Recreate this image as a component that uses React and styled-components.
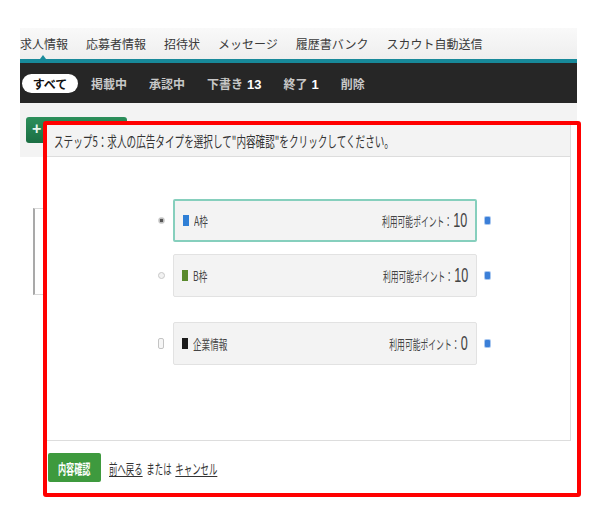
import React from "react";
import styled, { createGlobalStyle } from "styled-components";

const Global = createGlobalStyle`
  html, body { margin: 0; padding: 0; background: #ffffff; }
  body { font-family: "Noto Sans CJK JP", "Noto Sans", "Liberation Sans", sans-serif; color: #333; }
`;

const Page = styled.div`
  position: relative;
  width: 557px;
  margin: 28px 0 0 20px;
  height: 504px;
`;

const TopNav = styled.nav`
  display: flex;
  align-items: center;
  gap: 18px;
  height: 31px;
  background: linear-gradient(#f9f9f9, #eeeeee);
  position: relative;
`;

const NavItem = styled.span`
  position: relative;
  font-size: 12px;
  color: #3a3a3a;
  white-space: nowrap;
  line-height: 31px;
  ${p => p.$active && `
    &::after {
      content: "";
      position: absolute;
      left: 50%;
      bottom: 0;
      margin-left: -4px;
      border-left: 3px solid transparent;
      border-right: 3px solid transparent;
      border-bottom: 4px solid #1a8c9c;
    }
  `}
`;

const TealRule = styled.div`
  height: 4px;
  background: #17899a;
`;

const StatusBar = styled.div`
  display: flex;
  align-items: center;
  gap: 22px;
  height: 40px;
  padding-left: 2px;
  background: #262626;
`;

const Pill = styled.span`
  display: inline-flex;
  align-items: center;
  justify-content: center;
  height: 19px;
  width: 56px;
  margin-right: -9px;
  border-radius: 10px;
  background: #fff;
  color: #111;
  font-size: 12px;
  font-weight: 700;
`;

const StatusItem = styled.span`
  font-size: 12px;
  font-weight: 700;
  color: #c8c8c8;
  white-space: nowrap;
  b { color: #fff; margin-left: 4px; font-family: "Liberation Sans", sans-serif; font-size: 13px; }
`;

const ActionArea = styled.div`
  height: 54px;
  padding: 14px 0 0 6px;
  box-sizing: border-box;
  background: #f3f3f3;
`;

const NewButton = styled.div`
  width: 101px;
  height: 26px;
  border-radius: 3px;
  background: linear-gradient(#2c8f5b, #1b6e43);
  color: #e8f5ec;
  font-size: 16px;
  font-weight: 700;
  line-height: 24px;
  padding-left: 6px;
  box-sizing: border-box;
  font-family: "Liberation Sans", sans-serif;
`;

const ListStub = styled.div`
  margin: 51px 0 0 13px;
  width: 60px;
  height: 85px;
  border-left: 2px solid #a9a9a9;
  border-top: 1px solid #d8d8d8;
  border-bottom: 1px solid #d8d8d8;
`;

const Dialog = styled.div`
  position: absolute;
  left: 23px;
  top: 93px;
  width: 538px;
  height: 376px;
  box-sizing: border-box;
  border: 4px solid #ff0000;
  border-radius: 3px;
  background: #fff;
  display: flex;
  flex-direction: column;
`;

const Panel = styled.div`
  margin-right: 6px;
  border-right: 1px solid #dddddd;
  border-bottom: 1px solid #dddddd;
  display: flex;
  flex-direction: column;
  height: 316px;
  box-sizing: border-box;
`;

const PanelHead = styled.div`
  height: 32px;
  flex: none;
  box-sizing: border-box;
  background: #f3f3f3;
  border-bottom: 1px solid #dddddd;
  display: flex;
  align-items: center;
  padding-left: 7px;
  overflow: hidden;
`;

const Narrow = styled.span`
  display: inline-flex;
  align-items: center;
  white-space: pre;
  transform: scaleX(${p => p.$s || 0.74});
  transform-origin: ${p => p.$origin || "left"} center;
  font-size: ${p => p.$size || 13}px;
  color: ${p => p.$color || "#333"};
  font-weight: ${p => p.$weight || 400};
  u { text-decoration: underline; text-underline-offset: 2px; }
`;

const PanelBody = styled.div`
  flex: 1;
  padding: 42px 0 0 111px;
  display: flex;
  flex-direction: column;
`;

const OptionRow = styled.div`
  display: flex;
  align-items: center;
  margin-top: ${p => p.$gap || 0}px;
`;

const Radio = styled.span`
  width: 7px;
  height: 7px;
  border-radius: 50%;
  margin-right: 8px;
  box-sizing: border-box;
  border: 1px solid #c8c8c8;
  background: ${p => (p.$checked ? "radial-gradient(circle, #555 0 1.5px, #bdbdbd 2px)" : "#f2f2f2")};
`;

const CheckBox = styled.span`
  width: 6px;
  height: 11px;
  border-radius: 2px;
  margin: 0 9px 0 0;
  box-sizing: border-box;
  border: 1px solid #c4c4c4;
  background: #f6f6f6;
`;

const OptionBox = styled.div`
  width: 304px;
  height: 43px;
  box-sizing: border-box;
  display: flex;
  align-items: center;
  justify-content: space-between;
  padding: 0 8px 0 8px;
  background: #f3f3f3;
  border: ${p => (p.$selected ? "2px solid #86cfbd" : "1px solid #e2e2e2")};
  border-radius: 2px;
`;

const Label = styled.div`
  display: flex;
  align-items: center;
  gap: 5px;
`;

const Swatch = styled.span`
  width: 6px;
  height: 11px;
  background: ${p => p.$color};
`;

const Points = styled.div`
  display: flex;
  align-items: center;
  justify-content: flex-end;
  width: 140px;
`;

const Num = styled.span`
  font-family: "Liberation Sans", sans-serif;
  font-size: 21px;
  margin-left: 2px;
  line-height: 1;
  position: relative;
  top: -1px;
`;

const InfoIcon = styled.span`
  width: 5px;
  height: 7px;
  margin-left: 8px;
  border-radius: 1px;
  background: #3b7fd8;
  box-shadow: 0 0 0 1px #a9c8f0;
`;

const Footer = styled.div`
  display: flex;
  align-items: center;
  padding: 12px 0 0 1px;
  gap: 8px;
`;

const SubmitButton = styled.div`
  width: 53px;
  height: 29px;
  border-radius: 2px;
  background: #3e9a3e;
  display: flex;
  align-items: center;
  padding-left: 10px;
  box-sizing: border-box;
  overflow: hidden;
`;

function Option({ control, color, name, points, selected, gap }) {
  return (
    <OptionRow $gap={gap}>
      {control}
      <OptionBox $selected={selected}>
        <Label>
          <Swatch $color={color} />
          <Narrow $size={13} $s={0.66} $color="#444">{name}</Narrow>
        </Label>
        <Points>
          <Narrow $origin="right" $s={0.6} $size={13} $color="#444">
            利用可能ポイント：<Num>{points}</Num>
          </Narrow>
        </Points>
      </OptionBox>
      <InfoIcon />
    </OptionRow>
  );
}

export default function App() {
  return (
    <>
      <Global />
      <Page>
        <TopNav>
          <NavItem $active>求人情報</NavItem>
          <NavItem>応募者情報</NavItem>
          <NavItem>招待状</NavItem>
          <NavItem>メッセージ</NavItem>
          <NavItem>履歴書バンク</NavItem>
          <NavItem>スカウト自動送信</NavItem>
        </TopNav>
        <TealRule />
        <StatusBar>
          <Pill>すべて</Pill>
          <StatusItem>掲載中</StatusItem>
          <StatusItem>承認中</StatusItem>
          <StatusItem>下書き<b>13</b></StatusItem>
          <StatusItem>終了<b>1</b></StatusItem>
          <StatusItem>削除</StatusItem>
        </StatusBar>
        <ActionArea>
          <NewButton>+</NewButton>
        </ActionArea>
        <ListStub />
        <Dialog>
          <Panel>
            <PanelHead>
              <Narrow $size={15} $s={0.64}>ステップ5：求人の広告タイプを選択して"内容確認"をクリックしてください。</Narrow>
            </PanelHead>
            <PanelBody>
              <Option control={<Radio $checked />} color="#2f7fd6" name="A枠" points="10" selected />
              <Option control={<Radio />} color="#5a8a2c" name="B枠" points="10" gap={12} />
              <Option control={<CheckBox />} color="#1c1c1c" name="企業情報" points="0" gap={25} />
            </PanelBody>
          </Panel>
          <Footer>
            <SubmitButton>
              <Narrow $size={14} $s={0.58} $color="#fff" $weight={700}>内容確認</Narrow>
            </SubmitButton>
            <Narrow $size={14} $s={0.6} $color="#333">
              <u>前へ戻る</u>  または  <u>キャンセル</u>
            </Narrow>
          </Footer>
        </Dialog>
      </Page>
    </>
  );
}
